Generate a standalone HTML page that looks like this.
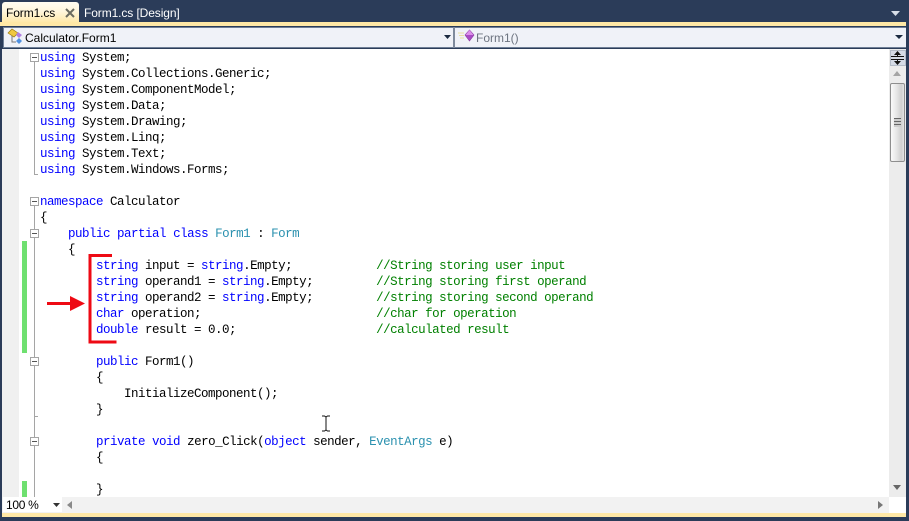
<!DOCTYPE html>
<html><head><meta charset="utf-8">
<style>
html,body{margin:0;padding:0;width:909px;height:521px;overflow:hidden;background:#2b3c59}
div{position:absolute;box-sizing:border-box}
.ui{font-family:"Liberation Sans",sans-serif;font-size:12px;letter-spacing:-.1px;white-space:pre;line-height:16px}
#code{left:40px;top:50px;width:840px;height:447px;overflow:hidden;margin:0;position:absolute;font-family:"Liberation Mono",monospace;font-size:12.5px;letter-spacing:-.5px;line-height:16px;color:#000;white-space:pre}
b{font-weight:normal;color:#0000ff}
i{font-style:normal;color:#2b91af}
u{text-decoration:none;color:#008000}
.box{width:9px;height:9px;left:30px;border:1px solid #a5a5a5;background:#fff}
.box:after{content:"";position:absolute;left:1px;top:3px;width:5px;height:1px;background:#555}
.v{left:34px;width:1px;background:#a5a5a5}
.g{left:22px;width:5px;background:#6fe070}
</style></head><body>
<!-- tabs -->
<div style="left:2px;top:2px;width:77px;height:21px;background:linear-gradient(#fffcf2,#fff6dc 45%,#ffe8a6);border-radius:3px 3px 0 0"></div>
<div class="ui" style="left:6px;top:5px;color:#000">Form1.cs</div>
<svg style="position:absolute;left:64px;top:7px" width="12" height="11"><path d="M2 2L10 10M10 2L2 10" stroke="#6b6b60" stroke-width="2" fill="none"/></svg>
<div class="ui" style="left:84px;top:5px;color:#fff">Form1.cs [Design]</div>
<svg style="position:absolute;left:891px;top:10px" width="10" height="7"><path d="M0 1H9L4.5 6Z" fill="#d8dee8"/></svg>
<div style="left:0;top:22px;width:906px;height:4px;background:#ffe8a6"></div>
<!-- nav bar -->
<div style="left:3px;top:27px;width:903px;height:21px;background:#f0f2f8;border:1px solid #6f7f96;border-width:1px 0 1px 1px"></div>
<div style="left:453px;top:27px;width:2px;height:21px;background:#7f8a9c"></div>
<svg style="position:absolute;left:7px;top:28px" width="18" height="17"><path d="M1 5L5 1L11 5L7 9Z" fill="#f0c840" stroke="#9a7a10" stroke-width=".7"/><path d="M11 4L15 7L12 10L9 7Z" fill="#b080e0"/><path d="M12 10L15 13L12 16L9 13Z" fill="#4f90e0"/><path d="M5 8V14H9" stroke="#777" fill="none"/></svg>
<div class="ui" style="left:25px;top:30px;color:#000;letter-spacing:0">Calculator.Form1</div>
<svg style="position:absolute;left:444px;top:35px" width="8" height="5"><path d="M0 0H7L3.5 4Z" fill="#1b2a40"/></svg>
<svg style="position:absolute;left:458px;top:29px" width="18" height="16"><path d="M0 4H6M1 6.500H6M2 9H6" stroke="#e8e0a0" fill="none"/><path d="M11.500 1L16 6L11.500 12L7 6Z" fill="#a94cc4" stroke="#8a3aa0" stroke-width=".6"/><path d="M11.500 1L15.500 6H7.500Z" fill="#dc90ea"/></svg>
<div class="ui" style="left:476px;top:30px;color:#6d7480;letter-spacing:0">Form1()</div>
<svg style="position:absolute;left:895px;top:35px" width="9" height="5"><path d="M0 0H8L4 4Z" fill="#1b2a40"/></svg>
<!-- editor -->
<div style="left:2px;top:49px;width:887px;height:448px;background:#fff"></div>
<div style="left:2px;top:49px;width:17px;height:448px;background:#f0f0f0"></div>
<div class="g" style="top:241px;height:112px"></div>
<div class="g" style="top:481px;height:16px"></div>
<div class="v" style="top:62px;height:112px"></div>
<div class="v" style="top:206px;height:291px"></div>
<div class="box" style="top:53px"></div>
<div class="box" style="top:197px"></div>
<div class="box" style="top:229px"></div>
<div class="box" style="top:357px"></div>
<div class="box" style="top:437px"></div>
<div style="left:34px;top:174px;width:4px;height:1px;background:#a5a5a5"></div>
<div style="left:34px;top:416px;width:4px;height:1px;background:#a5a5a5"></div>
<pre id="code"><b>using</b> System;
<b>using</b> System.Collections.Generic;
<b>using</b> System.ComponentModel;
<b>using</b> System.Data;
<b>using</b> System.Drawing;
<b>using</b> System.Linq;
<b>using</b> System.Text;
<b>using</b> System.Windows.Forms;

<b>namespace</b> Calculator
{
    <b>public</b> <b>partial</b> <b>class</b> <i>Form1</i> : <i>Form</i>
    {
        <b>string</b> input = <b>string</b>.Empty;            <u>//String storing user input</u>
        <b>string</b> operand1 = <b>string</b>.Empty;         <u>//String storing first operand</u>
        <b>string</b> operand2 = <b>string</b>.Empty;         <u>//string storing second operand</u>
        <b>char</b> operation;                         <u>//char for operation</u>
        <b>double</b> result = 0.0;                    <u>//calculated result</u>

        <b>public</b> Form1()
        {
            InitializeComponent();
        }

        <b>private</b> <b>void</b> zero_Click(<b>object</b> sender, <i>EventArgs</i> e)
        {

        }</pre>
<!-- red annotation -->
<svg style="position:absolute;left:40px;top:250px" width="90" height="100"><path d="M72 5.500H50V92H76.500" stroke="#ee0a14" stroke-width="3" fill="none"/><path d="M7 53.500H32" stroke="#ee0a14" stroke-width="3"/><path d="M30 46L45 53.500L30 61Z" fill="#ee0a14"/></svg>
<!-- I-beam -->
<svg style="position:absolute;left:321px;top:415px" width="10" height="17"><path d="M1 1H3.500L5 2L6.500 1H9M5 2V15M1 16H3.500L5 15L6.500 16H9" stroke="#111" fill="none"/></svg>
<!-- scrollbar -->
<div style="left:889px;top:49px;width:17px;height:448px;background:#ececec"></div>
<div style="left:890px;top:50px;width:16px;height:16px;background:#d5dbe6;border:1px solid #b4bcc8"></div>
<svg style="position:absolute;left:891px;top:51px" width="13" height="15"><path d="M6.500 0L10 4H3ZM6.500 14L10 10H3Z" fill="#111"/><path d="M0 5.500H13M0 8.500H13" stroke="#111"/><path d="M6.500 3V5M6.500 9V11" stroke="#111"/></svg>
<svg style="position:absolute;left:893px;top:71px" width="9" height="6"><path d="M0 5H8L4 0Z" fill="#a5a5a5"/></svg>
<div style="left:890px;top:83px;width:15px;height:79px;border:1px solid #8e8e8e;border-radius:2px;background:linear-gradient(90deg,#fafafa,#e8e8e8 40%,#cfcfcf 80%,#e4e4e4)"></div>
<div style="left:894px;top:118px;width:7px;height:9px;background:repeating-linear-gradient(#666 0 1px,#ccc 1px 3px)"></div>
<svg style="position:absolute;left:893px;top:485px" width="9" height="6"><path d="M0 0H8L4 5Z" fill="#666"/></svg>
<!-- bottom -->
<div style="left:2px;top:497px;width:887px;height:16px;background:#f2f2f2"></div>
<div style="left:3px;top:497px;width:59px;height:15px;background:#fff"></div>
<div class="ui" style="left:6px;top:497px;color:#000;letter-spacing:-.3px">100 %</div>
<svg style="position:absolute;left:53px;top:503px" width="8" height="5"><path d="M0 0H7L3.500 4Z" fill="#333"/></svg>
<svg style="position:absolute;left:67px;top:501px" width="6" height="9"><path d="M5 0V8L0 4Z" fill="#8a8a8a"/></svg>
<svg style="position:absolute;left:878px;top:501px" width="6" height="9"><path d="M0 0V8L5 4Z" fill="#777"/></svg>
<div style="left:889px;top:497px;width:17px;height:16px;background:#fff"></div>
<div style="left:2px;top:513px;width:904px;height:4px;background:#ffe8a6"></div>
</body></html>
